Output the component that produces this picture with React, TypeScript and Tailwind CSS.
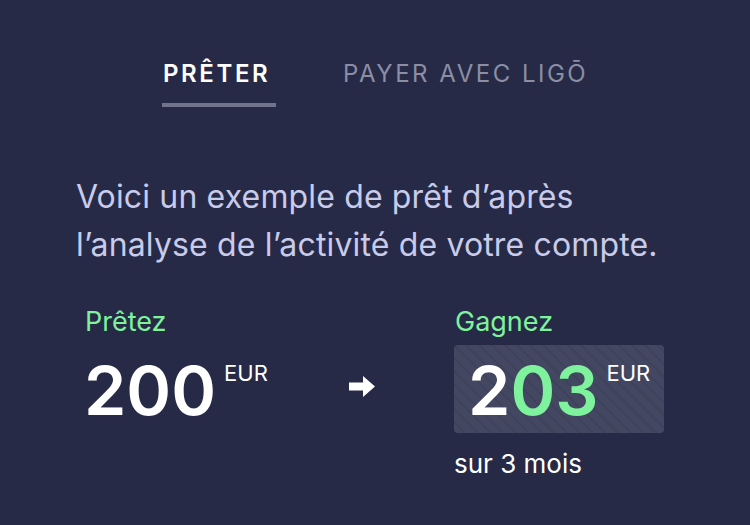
import React from 'react';

const App = () => {
  return (
    <div
      className="w-[750px] h-[525px] bg-[#262a46] overflow-hidden"
      style={{ fontFamily: 'Inter, "Noto Sans", sans-serif' }}
    >
      {/* Tabs */}
      <div className="flex pt-[58px] pl-[162px]">
        <div className="flex flex-col items-start">
          <span className="text-[24px] leading-[32px] font-semibold tracking-[2.6px] text-white pl-[1px]">PRÊTER</span>
          <div className="mt-[13px] h-[4px] w-[114px] bg-[#70738b]" />
        </div>
        <span className="ml-[67px] text-[24px] leading-[32px] tracking-[2.5px] text-[#8b8ea4]">PAYER AVEC LIGŌ</span>
      </div>

      {/* Intro */}
      <p className="mt-[66px] ml-[76px] text-[32px] leading-[48px] tracking-[0.15px] text-[#c8cbe9]">
        Voici un exemple de prêt d’après
        <br />
        l’analyse de l’activité de votre compte.
      </p>

      {/* Loan example */}
      <div className="flex mt-[37px] pl-[84px]">
        <div className="w-[265px] flex flex-col">
          <span className="pl-[1px] text-[27px] leading-[32px] text-[#7ef29d]">Prêtez</span>
          <div className="flex items-start mt-[17px]">
            <span className="text-[68px] leading-[70px] font-semibold text-white">200</span>
            <span className="ml-[8px] mt-[6px] text-[22px] leading-[24px] text-white">EUR</span>
          </div>
        </div>

        <div className="w-[26px] mt-[70px]">
          <svg width="26" height="21" viewBox="0 0 26 21">
            <path d="M0 6.5 H14 V0 L26 10.5 L14 21 V14.5 H0 Z" fill="#ffffff" />
          </svg>
        </div>

        <div className="ml-[79px] flex flex-col">
          <span className="pl-[1px] text-[27px] leading-[32px] text-[#7ef29d]">Gagnez</span>
          <div
            className="mt-[7px] w-[210px] h-[88px] rounded-[4px] bg-[#434761] flex items-start pl-[14px] pt-[10px]"
            style={{
              backgroundImage:
                'repeating-linear-gradient(45deg, rgba(255,255,255,0) 0px, rgba(255,255,255,0) 7px, rgba(0,0,0,0.07) 7px, rgba(0,0,0,0.07) 9px)',
            }}
          >
            <span className="text-[68px] leading-[70px] font-semibold">
              <span className="text-white">2</span>
              <span className="text-[#7ef29d]">03</span>
            </span>
            <span className="ml-[8px] mt-[6px] text-[22px] leading-[24px] text-white">EUR</span>
          </div>
          <span className="mt-[16px] text-[26px] leading-[30px] text-white">sur 3 mois</span>
        </div>
      </div>
    </div>
  );
};

export default App;
